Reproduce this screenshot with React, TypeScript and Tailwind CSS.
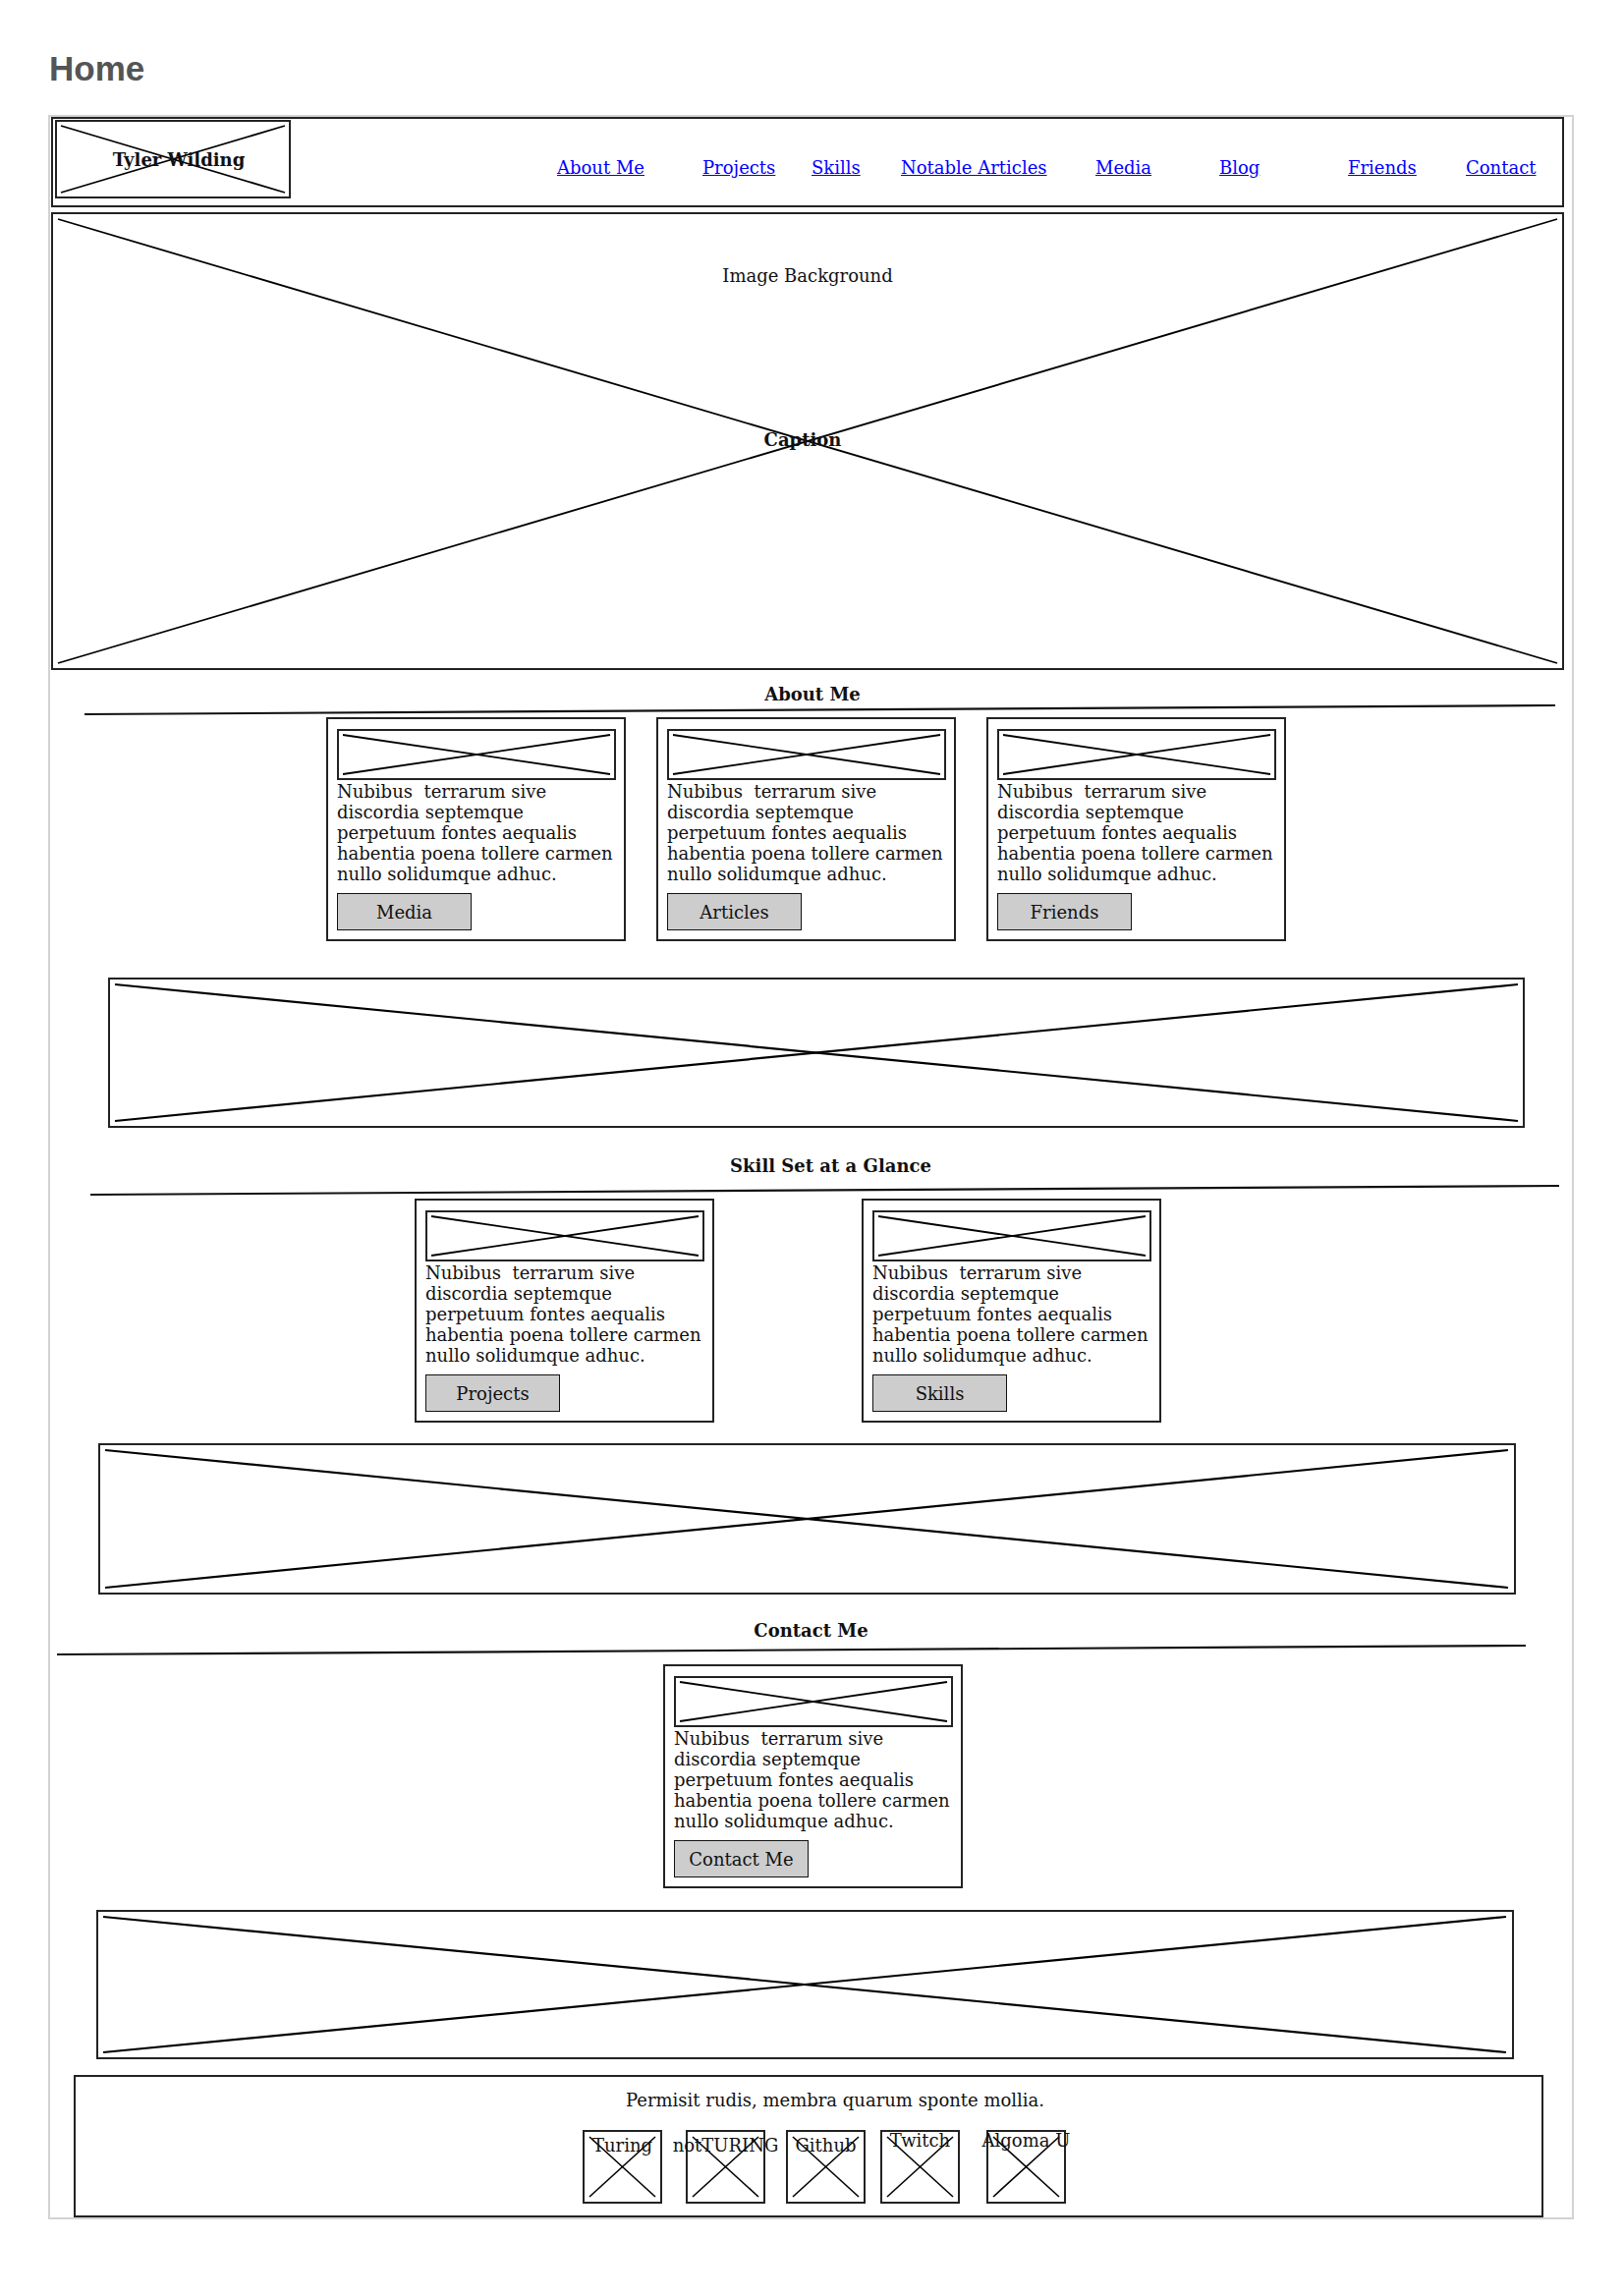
import React from "react";

function XLines({ w, h, inset = 5, sw = 1.8 }: { w: number; h: number; inset?: number; sw?: number }) {
  return (
    <svg width={w} height={h} className="absolute left-0 top-0 pointer-events-none">
      <line x1={inset} y1={inset} x2={w - inset} y2={h - inset} stroke="#000" strokeWidth={sw} />
      <line x1={inset} y1={h - inset} x2={w - inset} y2={inset} stroke="#000" strokeWidth={sw} />
    </svg>
  );
}

function Separator({ h, x1, y1, x2, y2 }: { h: number; x1: number; y1: number; x2: number; y2: number }) {
  return (
    <svg width={1549} height={h} className="block shrink-0">
      <line x1={x1} y1={y1} x2={x2} y2={y2} stroke="#111" strokeWidth={2.2} />
    </svg>
  );
}

const BODY = "Nubibus  terrarum sive\ndiscordia septemque\nperpetuum fontes aequalis\nhabentia poena tollere carmen\nnullo solidumque adhuc.";

function Card({ label }: { label: string }) {
  return (
    <div className="w-[305px] h-[228px] shrink-0 border-2 border-[#222] pt-[10px] pl-[9px] flex flex-col">
      <div className="relative w-[284px] h-[52px] border-2 border-[#222]">
        <XLines w={280} h={48} inset={4} />
      </div>
      <div className="mt-[1px] text-[18px] leading-[21px] whitespace-pre text-[#111]">{BODY}</div>
      <div className="mt-[9px] w-[137px] h-[38px] bg-[#cdcdcd] border-[1.5px] border-[#111] flex items-center justify-center text-[18px] leading-[21px] text-[#111]">
        {label}
      </div>
    </div>
  );
}

function Banner({ cls, h }: { cls: string; h: number }) {
  return (
    <div className={cls}>
      <XLines w={1438} h={h - 4} inset={5} sw={2.2} />
    </div>
  );
}

const NAV: { label: string; w: string }[] = [
  { label: "About Me", w: "w-[148px]" },
  { label: "Projects", w: "w-[111px]" },
  { label: "Skills", w: "w-[91px]" },
  { label: "Notable Articles", w: "w-[198px]" },
  { label: "Media", w: "w-[126px]" },
  { label: "Blog", w: "w-[131px]" },
  { label: "Friends", w: "w-[120px]" },
  { label: "Contact", w: "w-[80px]" },
];

const ICONS: { label: string; ml: string; lt: string }[] = [
  { label: "Turing", ml: "ml-[516px]", lt: "mt-[3px]" },
  { label: "notTURING", ml: "ml-[24px]", lt: "mt-[3px]" },
  { label: "Github", ml: "ml-[21px]", lt: "mt-[3px]" },
  { label: "Twitch", ml: "ml-[15px]", lt: "-mt-[2px]" },
  { label: "Algoma U", ml: "ml-[27px]", lt: "-mt-[2px]" },
];

export default function App() {
  return (
    <div className="bg-white min-h-[2337px] w-[1653px] font-['DejaVu_Serif','Liberation_Serif',serif] text-[#111]">
      <h1 className="pt-[52px] pl-[50px] font-['Liberation_Sans',Arial,sans-serif] font-bold text-[35px] leading-[35px] text-[#555]">
        Home
      </h1>

      <div className="mt-[30px] ml-[49px] w-[1553px] border-2 border-[#d2d2d2] flex flex-col">
        {/* Header */}
        <div className="ml-[1px] w-[1540px] h-[92px] border-2 border-[#222] flex items-start">
          <div className="relative mt-[1px] ml-[2px] w-[240px] h-[80px] border-2 border-[#222] flex items-center justify-center">
            <XLines w={236} h={76} inset={4} />
            <span className="relative font-bold text-[18px] leading-[21px] pl-[12px]">Tyler Wilding</span>
          </div>
          <nav className="ml-[271px] mt-[39px] flex">
            {NAV.map((n) => (
              <div key={n.label} className={n.w + " shrink-0"}>
                <a href="#" className="text-[18px] leading-[21px] text-[#0000ff] underline whitespace-nowrap">
                  {n.label}
                </a>
              </div>
            ))}
          </nav>
        </div>

        {/* Hero */}
        <div className="relative mt-[5px] ml-[1px] w-[1540px] h-[466px] border-2 border-[#222] flex flex-col items-center">
          <XLines w={1536} h={462} inset={5} />
          <div className="relative mt-[52px] text-[18px] leading-[21px]">Image Background</div>
          <div className="relative mt-[146px] pr-[10px] font-bold text-[18px] leading-[21px]">Caption</div>
        </div>

        {/* About Me */}
        <div className="mt-[14px] text-center font-bold text-[18px] leading-[21px] pl-[3px]">About Me</div>
        <Separator h={13} x1={35} y1={10} x2={1532} y2={1} />
        <div className="flex ml-[281px] gap-[31px]">
          <Card label="Media" />
          <Card label="Articles" />
          <Card label="Friends" />
        </div>

        <Banner cls="relative mt-[37px] ml-[59px] w-[1442px] h-[153px] border-2 border-[#222]" h={153} />

        {/* Skill Set */}
        <div className="mt-[28px] text-center font-bold text-[18px] leading-[21px] pl-[40px]">Skill Set at a Glance</div>
        <Separator h={23} x1={41} y1={19} x2={1536} y2={10} />
        <div className="flex ml-[371px] gap-[150px]">
          <Card label="Projects" />
          <Card label="Skills" />
        </div>

        <Banner cls="relative mt-[21px] ml-[49px] w-[1443px] h-[154px] border-2 border-[#222]" h={154} />

        {/* Contact */}
        <div className="mt-[26px] text-center font-bold text-[18px] leading-[21px]">Contact Me</div>
        <Separator h={24} x1={7} y1={14} x2={1502} y2={5} />
        <div className="flex ml-[624px]">
          <Card label="Contact Me" />
        </div>

        <Banner cls="relative mt-[22px] ml-[47px] w-[1443px] h-[152px] border-2 border-[#222]" h={152} />

        {/* Footer */}
        <div className="mt-[16px] ml-[24px] w-[1496px] h-[145px] border-2 border-[#222] flex flex-col">
          <div className="pt-[13px] pl-[54px] text-center text-[18px] leading-[21px]">
            Permisit rudis, membra quarum sponte mollia.
          </div>
          <div className="mt-[20px] flex">
            {ICONS.map((ic) => (
              <div
                key={ic.label}
                className={ic.ml + " relative w-[81px] h-[75px] shrink-0 border-2 border-[#222] flex flex-col items-center"}
              >
                <XLines w={77} h={71} inset={5} sw={1.6} />
                <span className={ic.lt + " relative whitespace-nowrap text-[18px] leading-[21px]"}>{ic.label}</span>
              </div>
            ))}
          </div>
        </div>
      </div>
    </div>
  );
}
